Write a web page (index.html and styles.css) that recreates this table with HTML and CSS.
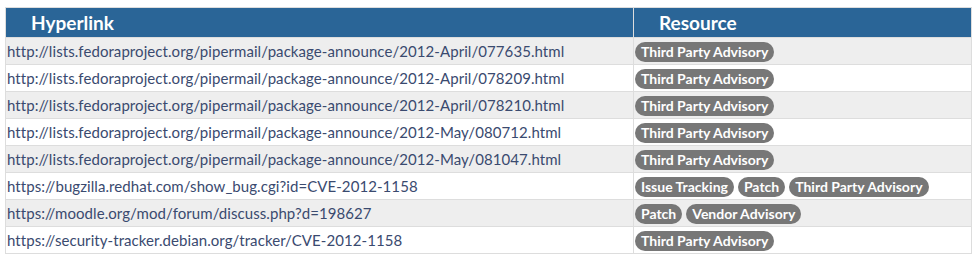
FILE: index.html
```html
<!DOCTYPE html>
<html>
<head>
<meta charset="utf-8">
<link rel="stylesheet" href="styles.css">
</head>
<body>
<div class="wrap">
<table class="refs">
  <thead>
    <tr><th class="c1">Hyperlink</th><th class="c2">Resource</th></tr>
  </thead>
  <tbody>
    <tr><td>http://lists.fedoraproject.org/pipermail/package-announce/2012-April/077635.html</td><td><span class="tag">Third Party Advisory</span></td></tr>
    <tr><td>http://lists.fedoraproject.org/pipermail/package-announce/2012-April/078209.html</td><td><span class="tag">Third Party Advisory</span></td></tr>
    <tr><td>http://lists.fedoraproject.org/pipermail/package-announce/2012-April/078210.html</td><td><span class="tag">Third Party Advisory</span></td></tr>
    <tr><td>http://lists.fedoraproject.org/pipermail/package-announce/2012-May/080712.html</td><td><span class="tag">Third Party Advisory</span></td></tr>
    <tr><td>http://lists.fedoraproject.org/pipermail/package-announce/2012-May/081047.html</td><td><span class="tag">Third Party Advisory</span></td></tr>
    <tr><td>https://bugzilla.redhat.com/show_bug.cgi?id=CVE-2012-1158</td><td><span class="tag">Issue Tracking</span><span class="tag">Patch</span><span class="tag">Third Party Advisory</span></td></tr>
    <tr><td>https://moodle.org/mod/forum/discuss.php?d=198627</td><td><span class="tag">Patch</span><span class="tag">Vendor Advisory</span></td></tr>
    <tr><td>https://security-tracker.debian.org/tracker/CVE-2012-1158</td><td><span class="tag">Third Party Advisory</span></td></tr>
  </tbody>
</table>
</div>
</body>
</html>
```
FILE: styles.css
```css
html, body {
  margin: 0;
  padding: 0;
  background: #ffffff;
}
.wrap {
  padding: 7px 0 0 5px;
}
.refs {
  width: 967px;
  border-collapse: collapse;
  border: 1px solid #dddddd;
  font-family: Lato, "Liberation Sans", sans-serif;
  font-size: 15px;
  letter-spacing: 0.07px;
  color: #3a4a6f;
}
.refs th {
  background: #2a6597;
  color: #ffffff;
  font-weight: 700;
  font-size: 19px;
  letter-spacing: 0;
  text-align: left;
  height: 30px;
  padding: 0 0 0 25px;
  box-sizing: border-box;
  border-left: 1px solid #dddddd;
}
.refs th.c1 { width: 628px; }
.refs td {
  height: 26px;
  padding: 0 0 0 1px;
  border-top: 1px solid #dddddd;
  border-left: 1px solid #dddddd;
  white-space: nowrap;
}
.refs tbody tr:nth-child(odd) td { background: #eeeeee; }
.tag {
  display: inline-block;
  background: #777777;
  color: #ffffff;
  font-weight: 700;
  font-size: 14px;
  letter-spacing: 0;
  line-height: 20px;
  padding: 0 6px;
  border-radius: 10px;
  margin-right: 4px;
  vertical-align: middle;
}
```
